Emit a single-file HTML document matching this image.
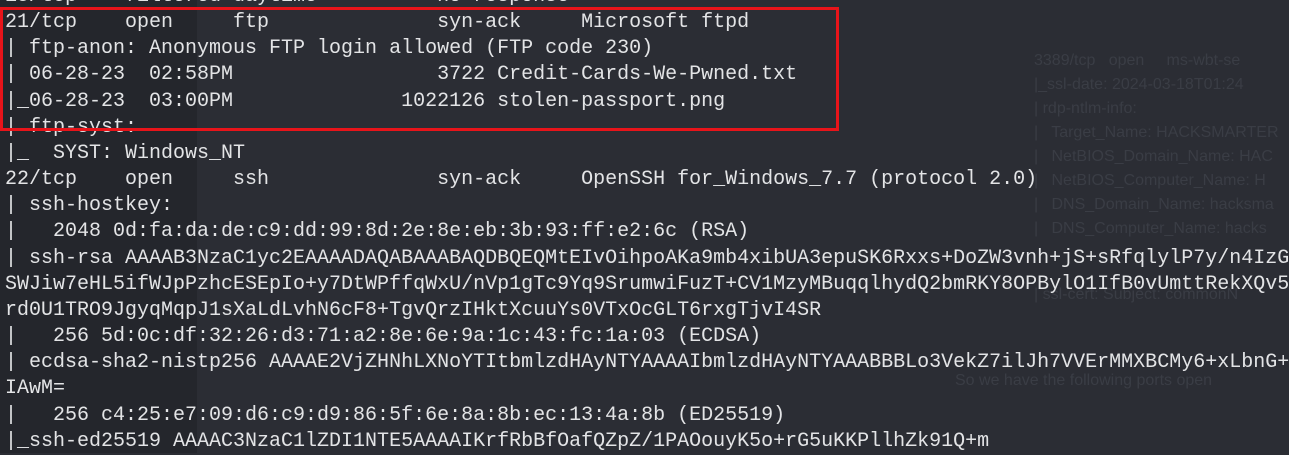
<!DOCTYPE html>
<html><head><meta charset="utf-8"><style>
html,body{margin:0;padding:0;}
body{width:1289px;height:453px;overflow:hidden;background:#2b2d34;position:relative;font-family:"Liberation Mono",monospace;}
.left{position:absolute;left:0;top:0;width:197px;height:453px;background:#24262c;}
.faint{position:absolute;color:#3a3d45;font-size:16px;font-family:"Liberation Sans",sans-serif;white-space:pre;}
pre{position:absolute;left:5px;top:-16px;margin:0;font-family:"Liberation Mono",monospace;font-size:20px;line-height:26.15px;color:#e3e4e6;white-space:pre;}
.box{position:absolute;left:0;top:7px;width:833px;height:118px;border:3px solid #e8141a;}
</style></head><body>
<div class="left"></div>
<div class="faint" style="left:1034px;top:52px">3389/tcp   open     ms-wbt-se</div>
<div class="faint" style="left:1034px;top:76px">|_ssl-date: 2024-03-18T01:24</div>
<div class="faint" style="left:1034px;top:100px">| rdp-ntlm-info:</div>
<div class="faint" style="left:1034px;top:124px">|   Target_Name: HACKSMARTER</div>
<div class="faint" style="left:1034px;top:148px">|   NetBIOS_Domain_Name: HAC</div>
<div class="faint" style="left:1034px;top:172px">|   NetBIOS_Computer_Name: H</div>
<div class="faint" style="left:1034px;top:196px">|   DNS_Domain_Name: hacksma</div>
<div class="faint" style="left:1034px;top:220px">|   DNS_Computer_Name: hacks</div>
<div class="faint" style="left:1034px;top:286px">| ssl-cert: Subject: commonN</div>
<div class="faint" style="left:955px;top:372px">So we have the following ports open</div>
<pre>18/tcp    filtered daytime          no-response
21/tcp    open     ftp              syn-ack     Microsoft ftpd
| ftp-anon: Anonymous FTP login allowed (FTP code 230)
| 06-28-23  02:58PM                 3722 Credit-Cards-We-Pwned.txt
|_06-28-23  03:00PM              1022126 stolen-passport.png
| ftp-syst:
|_  SYST: Windows_NT
22/tcp    open     ssh              syn-ack     OpenSSH for_Windows_7.7 (protocol 2.0)
| ssh-hostkey:
|   2048 0d:fa:da:de:c9:dd:99:8d:2e:8e:eb:3b:93:ff:e2:6c (RSA)
| ssh-rsa AAAAB3NzaC1yc2EAAAADAQABAAABAQDBQEQMtEIvOihpoAKa9mb4xibUA3epuSK6Rxxs+DoZW3vnh+jS+sRfqlylP7y/n4IzG
SWJiw7eHL5ifWJpPzhcESEpIo+y7DtWPffqWxU/nVp1gTc9Yq9SrumwiFuzT+CV1MzyMBuqqlhydQ2bmRKY8OPBylO1IfB0vUmttRekXQv5
rd0U1TRO9JgyqMqpJ1sXaLdLvhN6cF8+TgvQrzIHktXcuuYs0VTxOcGLT6rxgTjvI4SR
|   256 5d:0c:df:32:26:d3:71:a2:8e:6e:9a:1c:43:fc:1a:03 (ECDSA)
| ecdsa-sha2-nistp256 AAAAE2VjZHNhLXNoYTItbmlzdHAyNTYAAAAIbmlzdHAyNTYAAABBBLo3VekZ7ilJh7VVErMMXBCMy6+xLbnG+
IAwM=
|   256 c4:25:e7:09:d6:c9:d9:86:5f:6e:8a:8b:ec:13:4a:8b (ED25519)
|_ssh-ed25519 AAAAC3NzaC1lZDI1NTE5AAAAIKrfRbBfOafQZpZ/1PAOouyK5o+rG5uKKPllhZk91Q+m</pre>
<div class="box"></div>
</body></html>
